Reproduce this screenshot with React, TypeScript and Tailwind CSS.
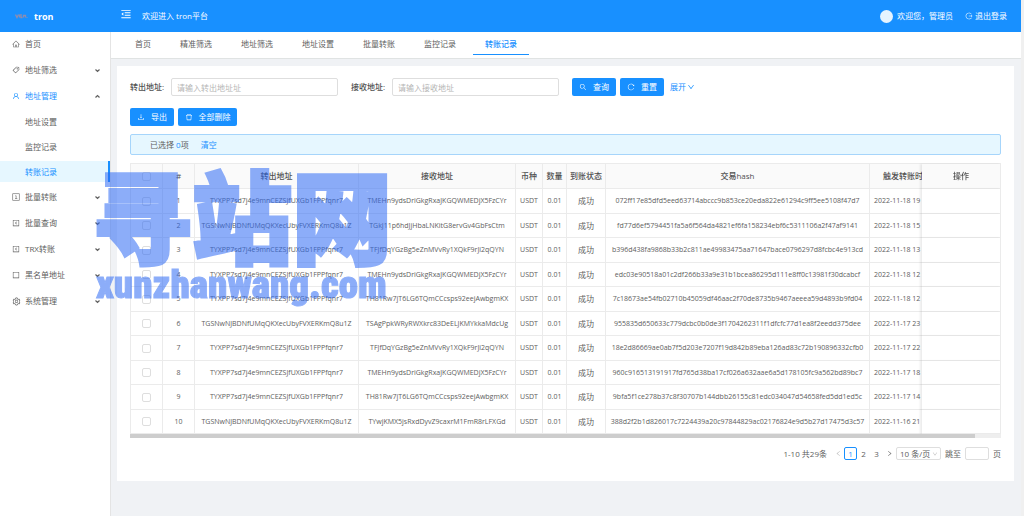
import React, { useState } from 'react'
import {
    AiOutlineHome,
    AiOutlineTag,
    AiOutlineUser,
    AiOutlineLeftSquare,
    AiOutlineBorder,
    AiOutlineSetting,
    AiOutlineMenuFold,
    AiOutlineLogout,
    AiOutlineSearch,
    AiOutlineReload,
    AiOutlineDownload,
    AiOutlineDelete,
    AiOutlineDown,
    AiOutlineLeft,
    AiOutlineRight
} from 'react-icons/ai'

interface MenuItem {
    label: string
    icon: React.ReactNode
    open?: boolean
    children?: string[]
}

const NumberSquare: React.FC = () => (
    <svg viewBox="0 0 16 16" className="w-2 h-2" fill="none" stroke="currentColor" strokeWidth="1.2">
        <rect x="1.5" y="1.5" width="13" height="13" />
        <path d="M6.5 5.5h1.8v5.5M6 11h4.6" />
    </svg>
)

const menu: MenuItem[] = [
    { label: '首页', icon: <AiOutlineHome /> },
    { label: '地址筛选', icon: <AiOutlineTag />, children: [] },
    { label: '地址管理', icon: <AiOutlineUser />, open: true, children: ['地址设置', '监控记录', '转账记录'] },
    { label: '批量转账', icon: <NumberSquare />, children: [] },
    { label: '批量查询', icon: <AiOutlineLeftSquare />, children: [] },
    { label: 'TRX转账', icon: <AiOutlineLeftSquare />, children: [] },
    { label: '黑名单地址', icon: <AiOutlineBorder />, children: [] },
    { label: '系统管理', icon: <AiOutlineSetting className="text-[9px]" />, children: [] }
]

const tabs = ['首页', '精准筛选', '地址筛选', '地址设置', '批量转账', '监控记录', '转账记录']

const A = 'TYXPP7sd7j4e9mnCEZSJfUXGb1FPPfqnr7'
const B = 'TGSNwNJBDNfUMqQKXecUbyFVXERKmQ8u1Z'

const rows = [
    { from: A, to: 'TMEHn9ydsDriGkgRxaJKGQWMEDjX5FzCYr', hash: '072ff17e85dfd5eed63714abccc9b853ce20eda822e61294c9ff5ee5108f47d7', time: '2022-11-18 19' },
    { from: B, to: 'TGkJ11p6hdJjHbaLNKitG8ervGv4GbFsCtm', hash: 'fd77d6ef5794451fa5a6f564da4821ef6fa158234ebf6c5311106a2f47af9141', time: '2022-11-18 15' },
    { from: A, to: 'TFJfDqYGzBg5eZnMVvRy1XQkF9rJi2qQYN', hash: 'b396d438fa9868b33b2c811ae49983475aa71647bace0796297d8fcbc4e913cd', time: '2022-11-18 13' },
    { from: A, to: 'TMEHn9ydsDriGkgRxaJKGQWMEDjX5FzCYr', hash: 'edc03e90518a01c2df266b33a9e31b1bcea86295d111e8ff0c13981f30dcabcf', time: '2022-11-18 12' },
    { from: A, to: 'TH81Rw7jT6LG6TQmCCcsps92eejAwbgmKX', hash: '7c18673ae54fb02710b45059df46aac2f70de8735b9467aeeea59d4893b9fd04', time: '2022-11-18 12' },
    { from: B, to: 'TSAgPpkWRyRWXkrc83DeELJKMYkkaMdcUg', hash: '955835d650633c779dcbc0b0de3f1704262311f1dfcfc77d1ea8f2eedd375dee', time: '2022-11-17 23' },
    { from: A, to: 'TFJfDqYGzBg5eZnMVvRy1XQkF9rJi2qQYN', hash: '18e2d86669ae0ab7f5d203e7207f19d842b89eba126ad83c72b190896332cfb0', time: '2022-11-17 22' },
    { from: A, to: 'TMEHn9ydsDriGkgRxaJKGQWMEDjX5FzCYr', hash: '960c916513191917fd765d38ba17cf026a632aae6a5d178105fc9a562bd89bc7', time: '2022-11-17 18' },
    { from: A, to: 'TH81Rw7jT6LG6TQmCCcsps92eejAwbgmKX', hash: '9bfa5f1ce278b37c8f30707b144dbb26155c81edc034047d54658fed5dd1ed5c', time: '2022-11-17 14' },
    { from: B, to: 'TYwjKMX5jsRxdDyvZ9caxrM1FmR8rLFXGd', hash: '388d2f2b1d826017c7224439a20c97844829ac02176824e9d5b27d17475d3c57', time: '2022-11-16 21' }
]

const Caret: React.FC<{ up?: boolean }> = ({ up = false }) => (
    <svg viewBox="0 0 10 10" className={`w-[5px] h-[5px] ${up ? 'rotate-180' : ''}`} fill="none" stroke="currentColor" strokeWidth="2.4">
        <path d="M1 3l4 4 4-4" />
    </svg>
)

const Sidebar: React.FC = () => (
    <aside className="w-[110px] shrink-0 bg-white">
        <nav className="-mt-px">
            {menu.map((item) => (
                <div key={item.label}>
                    <a
                        href="#"
                        className={`h-[26px] pl-3 pr-2.5 flex items-center ${item.open ? 'text-[#1890ff]' : 'text-[#606060]'}`}
                    >
                        <span className="w-[13px] text-[8px]">{item.icon}</span>
                        <span className="flex-1">{item.label}</span>
                        {item.children && <span className="text-[#606060]"><Caret up={item.open} /></span>}
                    </a>
                    {item.open && item.children?.map((child) => (
                        <div key={child} className="py-0.5">
                            <a
                                href="#"
                                className={`h-[21px] pl-[25px] flex items-center ${child === '转账记录'
                                    ? 'bg-[#e6f7ff] text-[#1890ff] border-r-2 border-[#1890ff]'
                                    : 'text-[#606060]'}`}
                            >
                                {child}
                            </a>
                        </div>
                    ))}
                </div>
            ))}
        </nav>
    </aside>
)

const Header: React.FC = () => (
    <header className="h-8 bg-[#1890ff] text-white flex items-center">
        <div className="w-[110px] shrink-0 pl-[15px] flex items-center gap-1.5">
            <svg viewBox="0 0 26 12" className="w-[13px] h-1.5" fill="none" stroke="#8d8db0" strokeWidth="2.6">
                <path d="M1 3l3 6 3-6M9 3v6M12 2v7h3M17 9V5h4v4M24 8v1.5" />
            </svg>
            <span className="pt-0.5 text-[9px] font-bold">tron</span>
        </div>
        <div className="flex-1 pl-2.5 flex items-center gap-2.5">
            <button type="button" aria-label="menu" className="pb-1 text-[12px]"><AiOutlineMenuFold /></button>
            <span>欢迎进入 tron平台</span>
        </div>
        <div className="pr-3.5 flex items-center">
            <span className="w-[13px] h-[13px] rounded-full bg-[#e6f4ff]" />
            <span className="ml-1">欢迎您，管理员</span>
            <a href="#" className="ml-3 flex items-center gap-0.5">
                <AiOutlineLogout className="text-[8px]" />
                退出登录
            </a>
        </div>
    </header>
)

const primary = 'h-[18px] rounded-xs bg-[#1890ff] text-white flex items-center justify-center gap-1.5'
const field = 'w-[167px] h-[18px] px-[5px] border border-[#dedede] rounded-xs outline-none placeholder:text-[#b5b5b5]'

const SearchForm: React.FC = () => (
    <form className="flex flex-wrap items-center">
        <label htmlFor="from" className="w-[41px] font-medium text-[#505050]">转出地址:</label>
        <input id="from" className={field} placeholder="请输入转出地址址" />
        <label htmlFor="to" className="ml-[13px] w-[41px] font-medium text-[#505050]">接收地址:</label>
        <input id="to" className={field} placeholder="请输入接收地址" />
        <button type="button" className={`${primary} ml-[13px] w-11`}>
            <AiOutlineSearch /> 查询
        </button>
        <button type="button" className={`${primary} ml-1 w-11`}>
            <AiOutlineReload /> 重置
        </button>
        <a href="#" className="ml-1.5 flex items-center gap-px text-[#1890ff]">
            展开 <AiOutlineDown />
        </a>
    </form>
)

const th = 'border-b border-r border-[#ebebeb] bg-[#fafafa] font-medium text-[#505050] whitespace-nowrap'
const td = 'border-b border-r border-[#ebebeb] whitespace-nowrap'
const pinned = 'sticky right-0 shadow-[-2px_0_2px_rgba(0,0,0,0.08)]'
const checkbox = 'block mx-auto appearance-none w-[9px] h-[9px] border border-[#dedede] rounded-xs bg-white'

const TransferTable: React.FC = () => (
    <div>
        <div className="overflow-x-auto [scrollbar-width:none]">
            <table className="w-full min-w-[894px] table-fixed border-separate border-spacing-0 border-l border-t border-[#ebebeb] text-center">
                <colgroup>
                    <col className="w-8" />
                    <col className="w-8" />
                    <col className="w-[164px]" />
                    <col className="w-[157px]" />
                    <col className="w-[27px]" />
                    <col className="w-6" />
                    <col className="w-[39px]" />
                    <col />
                    <col className="w-[75px]" />
                    <col className="w-[79px]" />
                </colgroup>
                <thead>
                    <tr className="h-[25px]">
                        <th className={th}>
                            <input type="checkbox" aria-label="all" className={checkbox} />
                        </th>
                        <th className={th}>#</th>
                        <th className={th}>转出地址</th>
                        <th className={th}>接收地址</th>
                        <th className={th}>币种</th>
                        <th className={th}>数量</th>
                        <th className={th}>到账状态</th>
                        <th className={th}>交易hash</th>
                        <th className={th}>触发转账时间</th>
                        <th className={`${th} ${pinned}`}>操作</th>
                    </tr>
                </thead>
                <tbody className="text-[7px]">
                    {rows.map((row, i) => (
                        <tr key={row.hash} className="odd:h-[25px] even:h-6">
                            <td className={td}>
                                <input type="checkbox" aria-label={`${i + 1}`} className={checkbox} />
                            </td>
                            <td className={td}>{i + 1}</td>
                            <td className={td}>{row.from}</td>
                            <td className={td}>{row.to}</td>
                            <td className={td}>USDT</td>
                            <td className={td}>0.01</td>
                            <td className={`${td} text-[8px]`}>成功</td>
                            <td className={td}>{row.hash}</td>
                            <td className={`${td} pl-1 text-left`}>{row.time}</td>
                            <td className={`${td} ${pinned} bg-white`} />
                        </tr>
                    ))}
                </tbody>
            </table>
        </div>
        <div className="h-1 bg-[#eee]">
            <div className="h-full w-[97%] bg-[#cdcdcd]" />
        </div>
    </div>
)

const Pagination: React.FC = () => {
    const [page, setPage] = useState(1)

    return (
        <div className="mt-[9px] flex items-center justify-end">
            <span className="mr-2">1-10 共29条</span>
            <button type="button" aria-label="prev" className="w-[9px] text-[#bbb]"><AiOutlineLeft className="text-[7px]" /></button>
            {[1, 2, 3].map((n) => (
                <button
                    key={n}
                    type="button"
                    onClick={() => setPage(n)}
                    className={`w-[13px] h-[13px] flex items-center justify-center rounded-xs ${n === page ? 'border border-[#1890ff] text-[#1890ff]' : ''}`}
                >
                    {n}
                </button>
            ))}
            <button type="button" aria-label="next" className="w-[13px] flex justify-center"><AiOutlineRight className="text-[7px]" /></button>
            <div className="relative w-[45px]">
                <select aria-label="page size" className="w-full h-[13px] pl-[3px] appearance-none border border-[#dedede] rounded-xs leading-none">
                    <option>10 条/页</option>
                </select>
                <AiOutlineDown className="absolute right-[3px] top-1 text-[6px] text-[#bbb]" />
            </div>
            <label htmlFor="jump" className="ml-1">跳至</label>
            <input id="jump" className="mx-1 w-6 h-[13px] border border-[#dedede] rounded-xs" />
            <span>页</span>
        </div>
    )
}

const Watermark: React.FC = () => (
    <div className="absolute left-24 top-[161px] pointer-events-none select-none text-[#2f6bf5] opacity-55 whitespace-nowrap">
        <div className="-ml-1 font-['Noto_Sans_CJK_SC'] font-black text-[100px] leading-[104px] [-webkit-text-stroke:4px_#2f6bf5]">寻站网</div>
        <div className="font-['Roboto_Condensed','Roboto',sans-serif] font-black text-[39px] leading-10 [-webkit-text-stroke:1px_#2f6bf5]">xunzhanwang.com</div>
    </div>
)

const App: React.FC = () => {
    return (
        <div className="relative min-h-screen pr-[3px] flex flex-col bg-[#f0f0f0] font-['Open_Sans','Noto_Sans_CJK_SC',sans-serif] text-[8px] leading-3 text-[#606060]">
            <Header />
            <div className="flex-1 flex">
                <Sidebar />
                <div className="flex-1 min-w-0 border-l border-[#e4e4e4] bg-[#f0f2f5]">
                    <div className="pl-3 pb-[3px] flex gap-[5px] bg-white border-b border-[#e0e3e3]">
                        {tabs.map((tab) => (
                            <a
                                key={tab}
                                href="#"
                                className={`h-[23px] px-3 pt-0.5 flex items-center border-b ${tab === '转账记录' ? 'border-[#1890ff] text-[#1890ff] font-medium' : 'border-transparent'}`}
                            >
                                {tab}
                            </a>
                        ))}
                    </div>
                    <main className="mt-[7px] ml-1.5 mr-[7px] px-[13px] pt-3 pb-[21px] bg-white">
                        <SearchForm />
                        <div className="mt-3 flex gap-1">
                            <button type="button" className={`${primary} w-11`}>
                                <AiOutlineDownload /> 导出
                            </button>
                            <button type="button" className={`${primary} w-[59px]`}>
                                <AiOutlineDelete /> 全部删除
                            </button>
                        </div>
                        <div className="my-2 h-[21px] pl-[19px] flex items-center bg-[#e6f7ff] border border-[#a6d5fb] rounded-xs">
                            <span>已选择 <span className="text-[#1890ff]">0</span>项</span>
                            <a href="#" className="ml-3 text-[#1890ff]">清空</a>
                        </div>
                        <TransferTable />
                        <Pagination />
                    </main>
                </div>
            </div>
            <Watermark />
        </div>
    )
}

export default App
